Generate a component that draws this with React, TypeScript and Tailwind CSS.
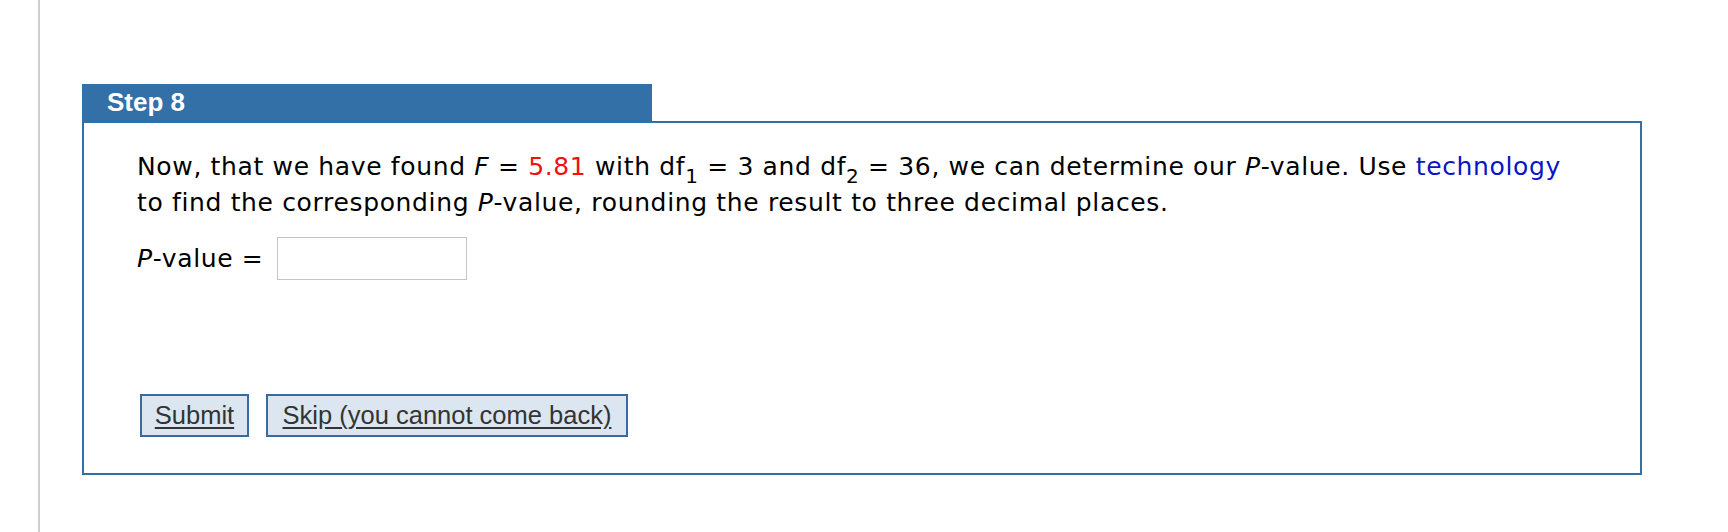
export default function App() {
  return (
    <div className="min-h-[532px] bg-white pl-[38px]">
      <div className="min-h-[532px] border-l-2 border-[#cfcfcf] pl-[42px] pt-[84px]">
        {/* step tab */}
        <div className="flex h-[37px] w-[570px] items-center bg-[#3470a8] pl-[25px]">
          <span className="font-['Liberation_Sans',Arial,sans-serif] text-[26px] font-bold text-white">
            Step 8
          </span>
        </div>

        <div className="h-[354px] w-[1560px] border-2 border-[#3470a8] px-[53px] pt-[26px] font-['DejaVu_Sans',Verdana,sans-serif] text-[25px] tracking-[0.65px] text-black">
          <p className="leading-[36px]">
            Now, that we have found <i>F</i> = <span className="text-[#f01010]">5.81</span> with df
            <sub className="top-[8px] text-[20px] leading-none">1</sub> = 3 and df
            <sub className="top-[8px] text-[20px] leading-none">2</sub> = 36, we can determine our{" "}
            <i>P</i>-value. Use <span className="text-[#0a14c8]">technology</span> to find the corresponding{" "}
            <i>P</i>-value, rounding the result to three decimal places.
          </p>

          <div className="mt-[16px] flex items-center">
            <span>
              <i>P</i>-value =
            </span>
            <input type="text" className="ml-[14px] h-[43px] w-[190px] border border-[#c4c4c4] bg-white outline-none" />
          </div>

          <div className="ml-[3px] mt-[114px] flex gap-[17px] font-['Liberation_Sans',Arial,sans-serif] text-[25.5px] tracking-normal text-[#333333]">
            <button type="button" className="h-[43px] w-[109px] border-2 border-[#3a6a9e] bg-[#dbe6f0] underline underline-offset-[3px]">
              Submit
            </button>
            <button type="button" className="h-[43px] w-[362px] border-2 border-[#3a6a9e] bg-[#dbe6f0] underline underline-offset-[3px]">
              Skip (you cannot come back)
            </button>
          </div>
        </div>
      </div>
    </div>
  );
}
